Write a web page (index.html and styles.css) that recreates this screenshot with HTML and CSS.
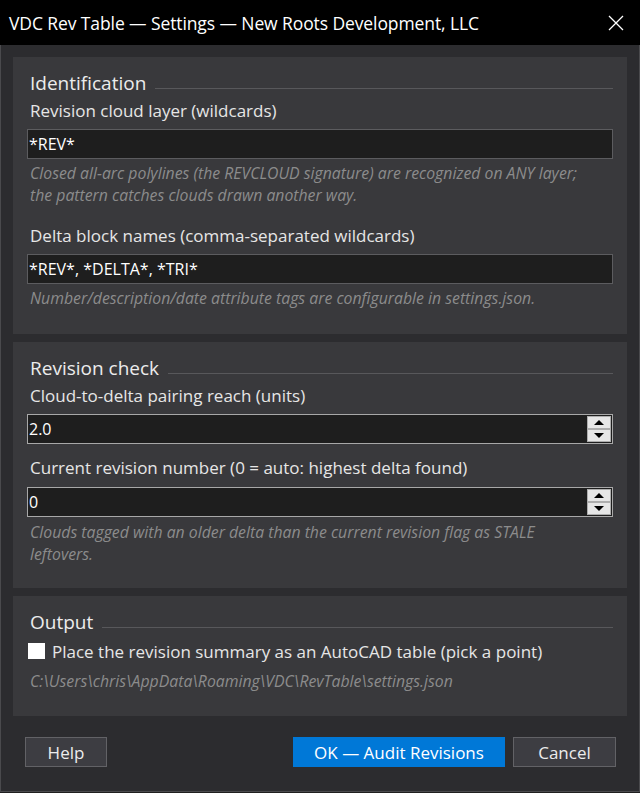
FILE: index.html
```html
<!DOCTYPE html>
<html lang="en">
<head>
    <meta charset="UTF-8">
    <meta name="viewport" content="width=device-width, initial-scale=1.0">
    <title>VDC Rev Table — Settings</title>
    <link rel="stylesheet" href="styles.css">
</head>
<body>
    <div class="window">
        <div class="titlebar">
            <span class="title">VDC Rev Table — Settings — New Roots Development, LLC</span>
            <svg class="close" width="16" height="16" viewBox="0 0 16 16">
                <path d="M1 1 L15 15 M15 1 L1 15" stroke="#fff" stroke-width="1.3" fill="none"/>
            </svg>
        </div>

        <div class="content">
            <div class="group group-ident">
                <div class="group-title">Identification</div>
                <label class="field-label">Revision cloud layer (wildcards)</label>
                <input type="text" class="text-input" value="*REV*">
                <p class="hint">Closed all-arc polylines (the REVCLOUD signature) are recognized on ANY layer; the pattern catches clouds drawn another way.</p>

                <label class="field-label spaced">Delta block names (comma-separated wildcards)</label>
                <input type="text" class="text-input" value="*REV*, *DELTA*, *TRI*">
                <p class="hint">Number/description/date attribute tags are configurable in settings.json.</p>
            </div>

            <div class="group">
                <div class="group-title">Revision check</div>
                <label class="field-label">Cloud-to-delta pairing reach (units)</label>
                <div class="spin">
                    <input type="text" class="spin-input" value="2.0">
                    <div class="spin-btns">
                        <div class="spin-btn"><span class="arrow up"></span></div>
                        <div class="spin-btn"><span class="arrow down"></span></div>
                    </div>
                </div>

                <label class="field-label spaced-sm">Current revision number (0 = auto: highest delta found)</label>
                <div class="spin">
                    <input type="text" class="spin-input" value="0">
                    <div class="spin-btns">
                        <div class="spin-btn"><span class="arrow up"></span></div>
                        <div class="spin-btn"><span class="arrow down"></span></div>
                    </div>
                </div>
                <p class="hint hint-spin">Clouds tagged with an older delta than the current revision flag as STALE leftovers.</p>
            </div>

            <div class="group group-last">
                <div class="group-title">Output</div>
                <div class="check-row">
                    <span class="checkbox"></span>
                    <span class="check-label">Place the revision summary as an AutoCAD table (pick a point)</span>
                </div>
                <p class="hint path">C:\Users\chris\AppData\Roaming\VDC\RevTable\settings.json</p>
            </div>

            <div class="footer">
                <button class="btn">Help</button>
                <div class="footer-right">
                    <button class="btn btn-primary">OK — Audit Revisions</button>
                    <button class="btn btn-cancel">Cancel</button>
                </div>
            </div>
        </div>
    </div>
</body>
</html>
```

FILE: styles.css
```css
:root {
    --window-bg: #2c2c2f;
    --group-bg: #39393c;
    --input-bg: #1e1e1e;
    --text: #e6e6e6;
    --hint: #8c8c8c;
    --accent: #0078d7;
}

body {
    margin: 0;
    background: #1f1f1f;
    font-family: "Open Sans", "Noto Sans", sans-serif;
    color: var(--text);
}

.window {
    width: 640px;
    height: 792px;
    box-sizing: border-box;
    background: var(--window-bg);
    border: 1px solid #4a4a4d;
    border-top: none;
    display: flex;
    flex-direction: column;
}

.titlebar {
    height: 45px;
    background: #000;
    display: flex;
    align-items: center;
    justify-content: space-between;
    padding: 0 16px 0 9px;
    margin: 0 -1px;
    flex-shrink: 0;
}

.title {
    font-size: 17.5px;
    color: #fff;
    letter-spacing: -0.1px;
}

.content {
    padding: 12px 12px 0 12px;
    display: flex;
    flex-direction: column;
    gap: 8px;
}

.group {
    background: var(--group-bg);
    padding: 14px 14px 23px 14px;
    display: flex;
    flex-direction: column;
}

.group-ident {
    padding-bottom: 25px;
}

.group-last {
    padding-bottom: 24px;
}

.group-title {
    display: flex;
    align-items: flex-end;
    font-size: 19px;
    line-height: 24px;
    padding-left: 3px;
    color: #ececec;
}

.group-title::after {
    content: "";
    flex: 1;
    border-top: 1px solid #58585b;
    margin: 0 0 6px 9px;
}

.field-label {
    font-size: 17px;
    line-height: 22px;
    padding-left: 3px;
    margin: 5px 0 7px;
}

.spaced {
    margin-top: 19px;
}

.spaced-sm {
    margin-top: 13px;
    margin-bottom: 8px;
}

.text-input {
    height: 30px;
    box-sizing: border-box;
    background: var(--input-bg);
    border: 1px solid #5c5c5f;
    color: #fff;
    font-family: inherit;
    font-size: 16px;
    padding: 0 1px;
    outline: none;
}

.hint {
    margin: 3px 0 0;
    padding: 0 18px 0 3px;
    font-size: 15.8px;
    line-height: 22px;
    font-style: italic;
    color: var(--hint);
}

.hint-spin {
    margin-top: 4px;
}

.spin {
    height: 30px;
    box-sizing: border-box;
    background: var(--input-bg);
    border: 1px solid #a8a8a8;
    display: flex;
}

.spin-input {
    flex: 1;
    min-width: 0;
    background: transparent;
    border: none;
    color: #fff;
    font-family: inherit;
    font-size: 16px;
    padding: 0 1px;
    outline: none;
}

.spin-btns {
    width: 24px;
    display: flex;
    flex-direction: column;
    padding: 1px 1px 1px 0;
}

.spin-btn {
    flex: 1;
    background: #e6e6e6;
    border: 1px solid #adadad;
    display: flex;
    align-items: center;
    justify-content: center;
}

.arrow {
    width: 0;
    height: 0;
    border-left: 5px solid transparent;
    border-right: 5px solid transparent;
}

.arrow.up {
    border-bottom: 5px solid #000;
}

.arrow.down {
    border-top: 5px solid #000;
}

.check-row {
    display: flex;
    align-items: center;
    gap: 7px;
    margin: 5px 0 0 1px;
    height: 24px;
}

.checkbox {
    width: 17px;
    height: 16px;
    background: #fff;
}

.check-label {
    font-size: 17px;
}

.path {
    margin-top: 7px;
}

.footer {
    display: flex;
    justify-content: space-between;
    padding: 13px 11px 0 12px;
}

.footer-right {
    display: flex;
    gap: 8px;
}

.btn {
    height: 30px;
    width: 82px;
    background: #3d3d42;
    border: 1px solid #626266;
    color: #ececec;
    font-family: inherit;
    font-size: 17px;
    padding: 0;
}

.btn-primary {
    width: 212px;
    background: var(--accent);
    border-color: var(--accent);
    color: #fff;
}

.btn-cancel {
    width: 103px;
}
```
